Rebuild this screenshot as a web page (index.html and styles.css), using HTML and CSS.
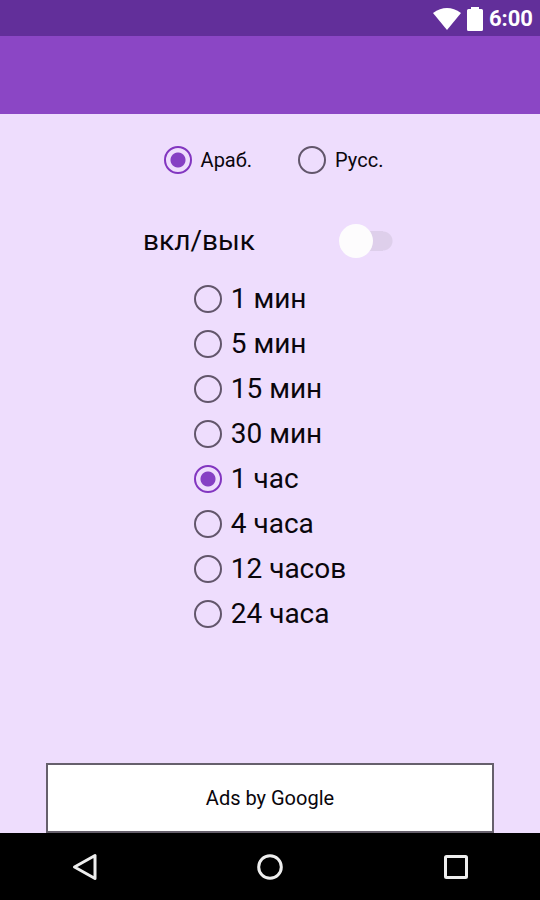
FILE: index.html
```
<!DOCTYPE html>
<html lang="ru">
<head>
    <meta charset="UTF-8">
    <meta name="viewport" content="width=device-width, initial-scale=1.0">
    <title>вкл/вык</title>

    <link rel="stylesheet" href="styles.css">
</head>
<body>

    <div class="status-bar">
        <svg class="icon-wifi" width="28" height="22" viewBox="0 0 28 22" aria-hidden="true">
            <path d="M0 5 Q14 -5 28 5 L14 22 Z" fill="#ffffff"/>
        </svg>
        <svg class="icon-battery" width="16" height="24" viewBox="0 0 16 24" aria-hidden="true">
            <path d="M4 0h8v2h2.500q1.500 0 1.500 1.500v19q0 1.500-1.500 1.500h-13q-1.500 0-1.500-1.500v-19q0-1.500 1.500-1.500h2.500z" fill="#ffffff"/>
        </svg>
        <span class="clock">6:00</span>
    </div>

    <header class="toolbar"></header>

    <main class="content">
        <div class="languages">
            <label class="option option-small">
                <input type="radio" name="language" value="ar" checked>
                <span>Араб.</span>
            </label>
            <label class="option option-small">
                <input type="radio" name="language" value="ru">
                <span>Русс.</span>
            </label>
        </div>

        <label class="switch-row">
            <span>вкл/вык</span>
            <input type="checkbox" class="switch" role="switch">
        </label>

        <div class="intervals">
            <label class="option"><input type="radio" name="interval" value="1"><span>1 мин</span></label>
            <label class="option"><input type="radio" name="interval" value="5"><span>5 мин</span></label>
            <label class="option"><input type="radio" name="interval" value="15"><span>15 мин</span></label>
            <label class="option"><input type="radio" name="interval" value="30"><span>30 мин</span></label>
            <label class="option"><input type="radio" name="interval" value="60" checked><span>1 час</span></label>
            <label class="option"><input type="radio" name="interval" value="240"><span>4 часа</span></label>
            <label class="option"><input type="radio" name="interval" value="720"><span>12 часов</span></label>
            <label class="option"><input type="radio" name="interval" value="1440"><span>24 часа</span></label>
        </div>

        <div class="ad">Ads by Google</div>
    </main>

    <nav class="nav-bar">
        <button type="button" aria-label="Назад">
            <svg width="48" height="48" viewBox="0 0 48 48">
                <path d="M35 12.500V35.500L14.500 24Z"/>
            </svg>
        </button>
        <button type="button" aria-label="Домой">
            <svg width="48" height="48" viewBox="0 0 48 48">
                <circle cx="24" cy="24" r="11.300"/>
            </svg>
        </button>
        <button type="button" aria-label="Недавние">
            <svg width="48" height="48" viewBox="0 0 48 48">
                <rect x="13.500" y="13.500" width="21" height="21" rx="1"/>
            </svg>
        </button>
    </nav>

</body>
</html>
```

FILE: styles.css
```
* {
    box-sizing: border-box;
}

body {
    margin: 0;
    min-height: 100vh;
    display: flex;
    flex-direction: column;
    background-color: #eeddfd;
    color: #0a060c;
    font-family: Roboto, "Noto Sans", sans-serif;
    font-size: 28px;
    line-height: 32px;
}

.status-bar {
    height: 36px;
    padding: 2px 7px 0;
    display: flex;
    align-items: center;
    justify-content: flex-end;
    gap: 6px;
    background-color: #622f9a;
    color: #ffffff;
}

.clock {
    font-size: 22px;
    font-weight: 700;
}

.toolbar {
    height: 78px;
    background-color: #8b46c5;
}

.content {
    flex: 1;
    display: flex;
    flex-direction: column;
    align-items: center;
    padding-top: 23px;
}

.languages {
    display: flex;
    gap: 46px;
    padding-left: 7px;
    margin-bottom: 36px;
}

.option {
    height: 45px;
    display: flex;
    align-items: center;
    gap: 9px;
    cursor: pointer;
}

.option-small {
    font-size: 20px;
}

.option input {
    appearance: none;
    width: 28px;
    height: 28px;
    margin: 0;
    flex: none;
    border: 2px solid #62566b;
    border-radius: 50%;
    cursor: pointer;
}

.option input:checked {
    border-color: #8236c0;
    background: radial-gradient(circle, #8640c4 7px, transparent 8px);
}

.switch-row {
    height: 45px;
    display: flex;
    align-items: center;
    gap: 84px;
    padding-right: 4px;
    margin-bottom: 13px;
    cursor: pointer;
}

.switch {
    appearance: none;
    width: 54px;
    height: 34px;
    margin: 0;
    display: flex;
    align-items: center;
    /* Round cap on each end of the track, straight bar between them */
    background:
        radial-gradient(circle, #decfeb 9px, transparent 10px) left center / 20px 20px no-repeat,
        radial-gradient(circle, #decfeb 9px, transparent 10px) right center / 20px 20px no-repeat,
        linear-gradient(#decfeb, #decfeb) center / 34px 20px no-repeat;
    cursor: pointer;
}

/* Thumb */
.switch::before {
    content: "";
    width: 34px;
    height: 34px;
    border-radius: 50%;
    background-color: #fdfcfd;
}

.switch:checked::before {
    margin-left: auto;
    background-color: #8640c4;
}

.ad {
    width: 83%;
    height: 70px;
    margin-top: auto;
    display: flex;
    align-items: center;
    justify-content: center;
    background-color: #ffffff;
    border: 2px solid #66606c;
    font-size: 20px;
}

.nav-bar {
    height: 67px;
    padding: 0 60px;
    display: flex;
    align-items: center;
    justify-content: space-between;
    background-color: #000000;
}

.nav-bar button {
    padding: 0;
    border: none;
    background: none;
    cursor: pointer;
}

.nav-bar svg {
    display: block;
    fill: none;
    stroke: #eeeeee;
    stroke-width: 3;
    stroke-linejoin: round;
}
```
